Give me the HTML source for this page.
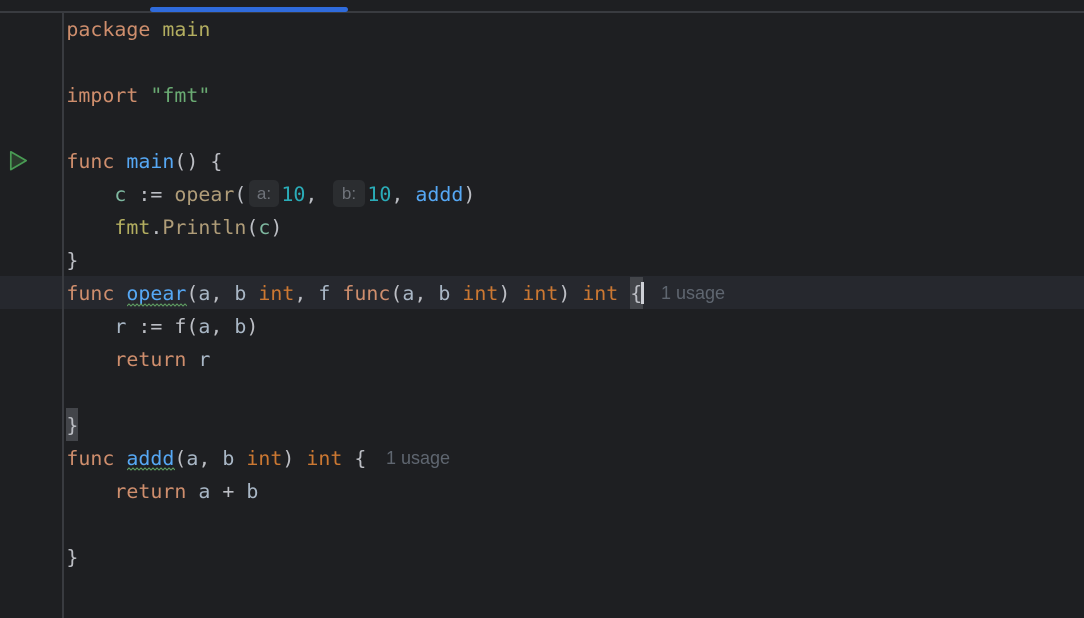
<!DOCTYPE html>
<html><head><meta charset="utf-8"><style>
html,body{margin:0;padding:0;background:#1e1f22;width:1084px;height:618px;overflow:hidden}
#r{position:relative;width:1084px;height:618px;background:#1e1f22;overflow:hidden;font-family:"DejaVu Sans Mono","Liberation Mono",monospace;font-size:19.93px;color:#bcbec4}
.l{position:absolute;white-space:pre;line-height:33px;height:33px;margin-left:-0.6px}
.k{color:#cf8e6d}.p{color:#b3ae60}.s{color:#6aab73}.f{color:#56a8f5}.t{color:#cc7832}.n{color:#2aacb8}
.v{color:#a9b7c6}.c{color:#7eb8a0}.m{color:#b09d79}.w{color:#bcbec4}
.h{position:absolute;background:#2b2d30;border-radius:5px;height:27px;top:180px;color:#6f737a;font:17px/27px "Liberation Sans",sans-serif;text-align:center}
.u{position:absolute;color:#5f6670;font:18px/33px "Liberation Sans",sans-serif;white-space:pre}
</style></head><body><div id="r">
<div style="position:absolute;left:0;top:276px;width:1084px;height:33px;background:#26282e"></div>
<div style="position:absolute;left:0;top:11px;width:1084px;height:2px;background:#393b40"></div>
<div style="position:absolute;left:62px;top:13px;width:2px;height:605px;background:#393b40"></div>
<div style="position:absolute;left:150px;top:7px;width:198px;height:5px;border-radius:3px;background:#2f6bdc"></div>
<svg style="position:absolute;left:8px;top:149px" width="22" height="24" viewBox="0 0 22 24"><path d="M2.8 2.8 L18.2 11.6 L2.8 20.6 Z" fill="#2a3b2c" stroke="#499c54" stroke-width="1.7" stroke-linejoin="round"/></svg>
<div style="position:absolute;left:630px;top:277px;width:13px;height:32px;background:#43454a"></div>
<div style="position:absolute;left:66px;top:408px;width:12px;height:33px;background:#43454a"></div>
<div style="position:absolute;left:641px;top:282px;width:3px;height:22px;background:#ced0d6"></div>
<div class="h" style="left:249px;width:30px">a:</div>
<div class="h" style="left:333px;width:32px">b:</div>

<div class="l" style="left:67px;top:13px"><span class="k">package</span> <span class="p">main</span></div>
<div class="l" style="left:67px;top:79px"><span class="k">import</span> <span class="s">"fmt"</span></div>
<div class="l" style="left:67px;top:145px"><span class="k">func</span> <span class="f">main</span>() {</div>
<div class="l" style="left:115px;top:178px"><span class="c">c</span> := <span class="m">opear</span>(</div>
<div class="l" style="left:282px;top:178px"><span class="n">10</span>,</div>
<div class="l" style="left:368px;top:178px"><span class="n">10</span>, <span class="f">addd</span>)</div>
<div class="l" style="left:115px;top:211px"><span class="p">fmt</span>.<span class="m">Println</span>(<span class="c">c</span>)</div>
<div class="l" style="left:67px;top:244px">}</div>
<div class="l" style="left:67px;top:277px"><span class="k">func</span> <span class="f">opear</span>(<span class="v">a</span>, <span class="v">b</span> <span class="t">int</span>, <span class="v">f</span> <span class="k">func</span>(<span class="v">a</span>, <span class="v">b</span> <span class="t">int</span>) <span class="t">int</span>) <span class="t">int</span> {</div>
<div class="u" style="left:661px;top:277px">1 usage</div>
<div class="l" style="left:115px;top:310px"><span class="v">r</span> := <span class="w">f</span>(<span class="v">a</span>, <span class="v">b</span>)</div>
<div class="l" style="left:115px;top:343px"><span class="k">return</span> <span class="v">r</span></div>
<div class="l" style="left:67px;top:409px">}</div>
<div class="l" style="left:67px;top:442px"><span class="k">func</span> <span class="f">addd</span>(<span class="v">a</span>, <span class="v">b</span> <span class="t">int</span>) <span class="t">int</span> {</div>
<div class="u" style="left:386px;top:442px">1 usage</div>
<div class="l" style="left:115px;top:475px"><span class="k">return</span> <span class="v">a</span> + <span class="v">b</span></div>
<div class="l" style="left:67px;top:541px">}</div>

<svg style="position:absolute;left:127px;top:303px" width="60" height="5" viewBox="0 0 60 5"><path d="M0 3 l2-2 2 2 2-2 2 2 2-2 2 2 2-2 2 2 2-2 2 2 2-2 2 2 2-2 2 2 2-2 2 2 2-2 2 2 2-2 2 2 2-2 2 2 2-2 2 2 2-2 2 2 2-2 2 2 2-2 2 2" fill="none" stroke="#5f9e62" stroke-width="1"/></svg>
<svg style="position:absolute;left:127px;top:467px" width="48" height="5" viewBox="0 0 48 5"><path d="M0 3 l2-2 2 2 2-2 2 2 2-2 2 2 2-2 2 2 2-2 2 2 2-2 2 2 2-2 2 2 2-2 2 2 2-2 2 2 2-2 2 2 2-2 2 2 2-2 2 2" fill="none" stroke="#5f9e62" stroke-width="1"/></svg>
</div></body></html>
